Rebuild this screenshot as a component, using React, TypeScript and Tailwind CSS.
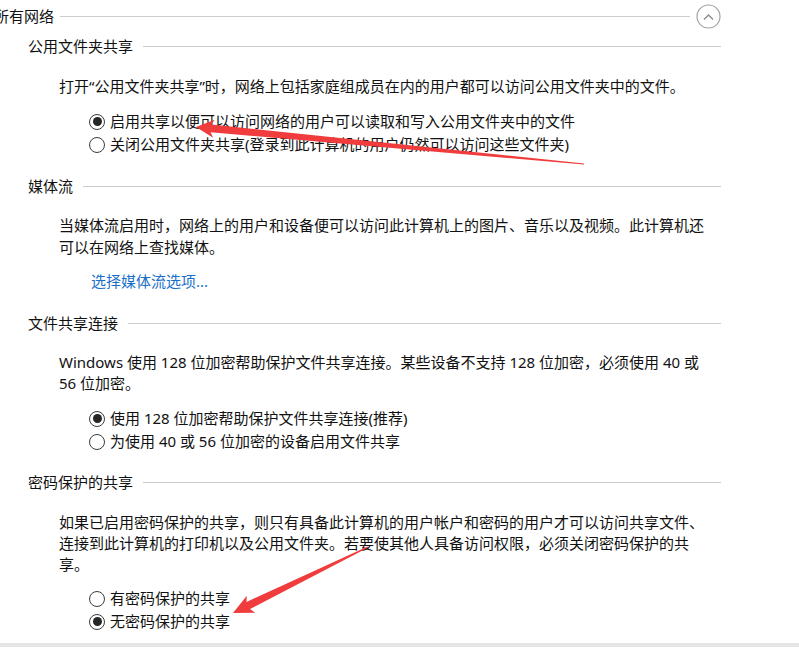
import React from 'react';

type Pt = [number, number];

// builds a tapered annotation arrow (tip -> tail)
const arrowPoints = (tip: Pt, tail: Pt, headLen: number, headHalf: number, neckHalf: number, tailHalf: number, notch: number) => {
  const dx = tail[0] - tip[0];
  const dy = tail[1] - tip[1];
  const len = Math.hypot(dx, dy);
  const ux = dx / len;
  const uy = dy / len;
  const nx = -uy;
  const ny = ux;
  const base: Pt = [tip[0] + ux * headLen, tip[1] + uy * headLen];
  const neck: Pt = [tip[0] + ux * (headLen - notch), tip[1] + uy * (headLen - notch)];
  const pts: Pt[] = [
    tip,
    [base[0] + nx * headHalf, base[1] + ny * headHalf],
    [neck[0] + nx * neckHalf, neck[1] + ny * neckHalf],
    [tail[0] + nx * tailHalf, tail[1] + ny * tailHalf],
    [tail[0] - nx * tailHalf, tail[1] - ny * tailHalf],
    [neck[0] - nx * neckHalf, neck[1] - ny * neckHalf],
    [base[0] - nx * headHalf, base[1] - ny * headHalf],
  ];
  return pts.map(p => `${p[0].toFixed(1)},${p[1].toFixed(1)}`).join(' ');
};

const Radio = ({ checked, label, className = '' }: { checked?: boolean; label: string; className?: string }) => (
  <div className={`flex items-center h-[23px] pl-[89px] ${className}`}>
    <span className="w-[16px] h-[16px] rounded-full border border-[#3c3c3c] bg-white flex items-center justify-center shrink-0 mt-[2px]">
      {checked && <span className="w-[9px] h-[9px] rounded-full bg-[#262626]" />}
    </span>
    <span className="ml-[5px] whitespace-nowrap">{label}</span>
  </div>
);

const SectionTitle = ({ title, className = '' }: { title: string; className?: string }) => (
  <div className={`flex items-center h-[22px] pl-[28px] pr-[78px] ${className}`}>
    <span className="whitespace-nowrap">{title}</span>
    <div className="flex-1 h-px bg-[#cdcdcd] ml-[10px]" />
  </div>
);

export default function App() {
  return (
    <div className="relative w-[799px] h-[647px] overflow-hidden bg-white text-[#111] text-[15px] leading-[22px] font-['Noto_Sans','Noto_Sans_CJK_SC',sans-serif]">
      <div className="flex flex-col pt-[5px]">
        {/* top group header, its first glyph runs past the left edge */}
        <div className="flex items-center h-[22px] -ml-[6px] pr-[78px]">
          <span className="whitespace-nowrap">所有网络</span>
          <div className="flex-1 h-px bg-[#cdcdcd] ml-[6px]" />
          <svg width="25" height="25" viewBox="0 0 25 25" className="ml-[6px] shrink-0">
            <circle cx="12.5" cy="12.5" r="11.5" fill="white" stroke="#a3a3a3" strokeWidth="1.2" />
            <polyline points="8,15.5 12.5,11 17,15.5" fill="none" stroke="#8c8c8c" strokeWidth="1.4" />
          </svg>
        </div>

        <SectionTitle title="公用文件夹共享" className="mt-[8px]" />
        <p className="pl-[59px] mt-[18px] whitespace-nowrap">
          打开“公用文件夹共享”时，网络上包括家庭组成员在内的用户都可以访问公用文件夹中的文件。
        </p>
        <Radio checked label="启用共享以便可以访问网络的用户可以读取和写入公用文件夹中的文件" className="mt-[12px]" />
        <Radio label="关闭公用文件夹共享(登录到此计算机的用户仍然可以访问这些文件夹)" />

        <SectionTitle title="媒体流" className="mt-[20px]" />
        <p className="pl-[59px] mt-[17px] whitespace-nowrap">
          当媒体流启用时，网络上的用户和设备便可以访问此计算机上的图片、音乐以及视频。此计算机还
          <br />
          可以在网络上查找媒体。
        </p>
        <div className="pl-[91px] mt-[12px] h-[22px]">
          <span className="text-[#1a6fc9]">选择媒体流选项...</span>
        </div>

        <SectionTitle title="文件共享连接" className="mt-[20px]" />
        <p className="pl-[59px] mt-[18px] leading-[21px] whitespace-nowrap">
          Windows 使用 128 位加密帮助保护文件共享连接。某些设备不支持 128 位加密，必须使用 40 或
          <br />
          56 位加密。
        </p>
        <Radio checked label="使用 128 位加密帮助保护文件共享连接(推荐)" className="mt-[12px]" />
        <Radio label="为使用 40 或 56 位加密的设备启用文件共享" />

        <SectionTitle title="密码保护的共享" className="mt-[19px]" />
        <p className="pl-[59px] mt-[19px] leading-[21px] whitespace-nowrap">
          如果已启用密码保护的共享，则只有具备此计算机的用户帐户和密码的用户才可以访问共享文件、
          <br />
          连接到此计算机的打印机以及公用文件夹。若要使其他人具备访问权限，必须关闭密码保护的共
          <br />
          享。
        </p>
        <Radio label="有密码保护的共享" className="mt-[11px]" />
        <Radio checked label="无密码保护的共享" />
      </div>

      {/* bottom edge */}
      <div className="absolute left-0 right-0 bottom-0 h-[4px] bg-[#e6e6e6]" />

      {/* red annotation arrows */}
      <svg className="absolute inset-0 pointer-events-none" width="799" height="647">
        <polygon points={arrowPoints([196, 127], [584, 164], 18, 9, 3.8, 0.6, 3)} fill="#f03c3c" />
        <polygon points={arrowPoints([233, 613], [368, 547], 20, 9.5, 4, 0.6, 3)} fill="#f03c3c" />
      </svg>
    </div>
  );
}
